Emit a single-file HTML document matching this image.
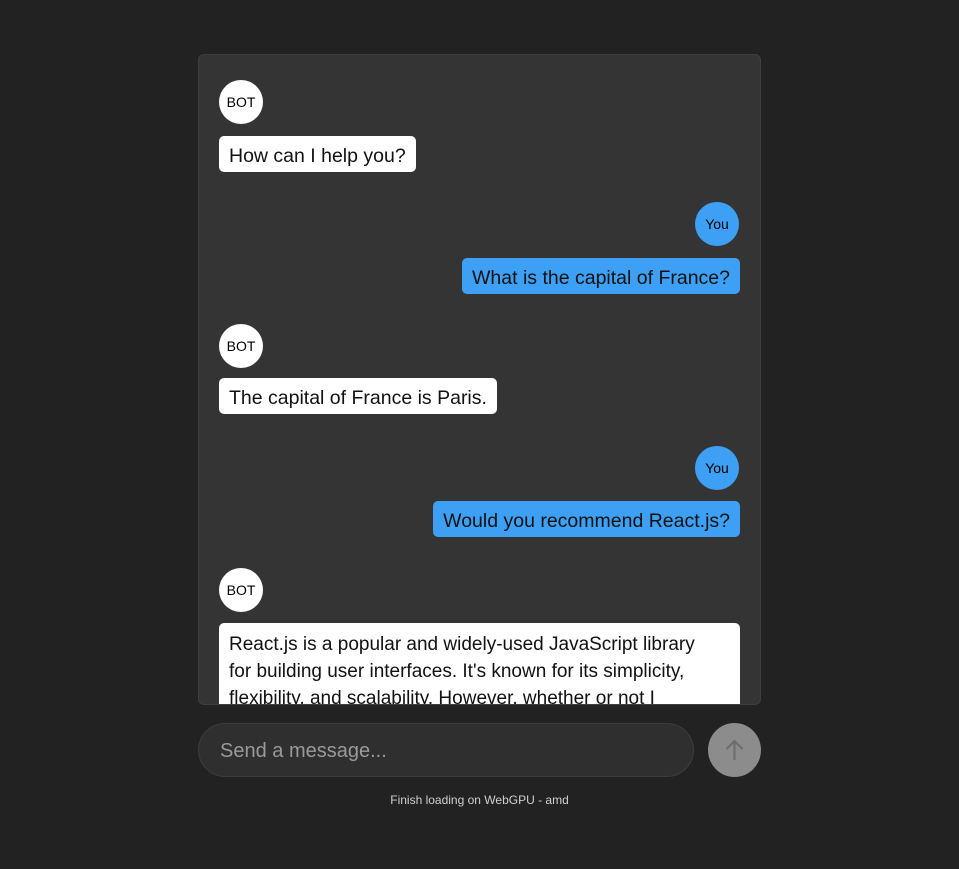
<!DOCTYPE html>
<html><head><style>
body{margin:0;width:959px;height:869px;background:#222;font-family:"Liberation Sans",sans-serif;position:relative;overflow:hidden}
.panel{position:absolute;left:198px;top:54px;width:561px;height:649px;background:#343434;border:1px solid #3e3e3e;border-radius:6px;overflow:hidden}
.av{position:absolute;width:44px;height:44px;border-radius:50%;background:#fff;color:#000;font-size:14px;display:flex;align-items:center;justify-content:center}
.you{background:#3ea0f5}
.b{position:absolute;background:#fff;color:#111;font-size:19.5px;border-radius:5px;padding:2px 10px 0;height:34px;line-height:37px;white-space:nowrap;overflow:hidden}
.u{background:#3ea0f5}
</style></head><body>
<div class="panel">
<div class="av" style="left:20px;top:25px">BOT</div>
<div class="b" style="left:20px;top:81px">How can I help you?</div>
<div class="av you" style="left:496px;top:147px">You</div>
<div class="b u" style="right:20px;top:203px">What is the capital of France?</div>
<div class="av" style="left:20px;top:269px">BOT</div>
<div class="b" style="left:20px;top:323px">The capital of France is Paris.</div>
<div class="av you" style="left:496px;top:391px">You</div>
<div class="b u" style="right:20px;top:446px">Would you recommend React.js?</div>
<div class="av" style="left:20px;top:513px">BOT</div>
<div class="b" style="left:20px;top:568px;width:501px;height:auto;line-height:27px;padding-top:8px;padding-bottom:10px;font-size:19px">React.js is a popular and widely-used JavaScript library<br>for building user interfaces. It's known for its simplicity,<br>flexibility, and scalability. However, whether or not I<br>would recommend it depends on your needs.</div>
</div>
<div style="position:absolute;left:198px;top:723px;height:52px;border:1px solid #3c3c3c;border-radius:27px;background:#2f2f2f;color:#9a9a9a;font-size:20px;line-height:54px;padding-left:21px;width:473px">Send a message...</div>
<div style="position:absolute;left:708px;top:723px;width:53px;height:54px;border-radius:50%;background:#8c8c8c">
<svg width="53" height="54" viewBox="0 0 53 54"><path d="M26.5 36V18M19 25.5l7.5-7.5 7.5 7.5" stroke="#6e6e6e" stroke-width="2.2" fill="none" stroke-linecap="round" stroke-linejoin="round"/></svg></div>
<div style="position:absolute;left:0;width:959px;top:793px;text-align:center;color:#d0d0d0;font-size:12px">Finish loading on WebGPU - amd</div>
</body></html>
